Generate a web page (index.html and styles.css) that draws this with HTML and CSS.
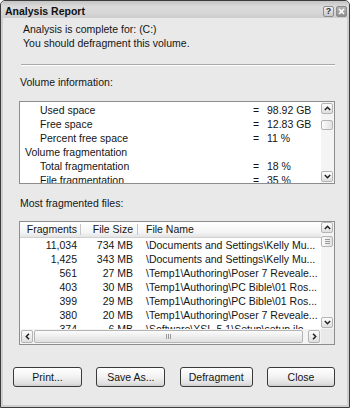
FILE: index.html
```html
<!DOCTYPE html>
<html>
<head>
<meta charset="utf-8">
<title>Analysis Report</title>
<link rel="stylesheet" href="styles.css">
</head>
<body>
<div class="window">
  <div class="titlebar">
    <span class="title">Analysis Report</span>
    <div class="caption-btns">
      <span class="cbtn help">?</span>
      <span class="cbtn close"><svg width="7" height="7" viewBox="0 0 7 7"><path d="M1 1L6 6M6 1L1 6" stroke="#fff" stroke-width="1.6"/></svg></span>
    </div>
  </div>
  <div class="body">
    <p class="msg">Analysis is complete for: (C:)<br>You should defragment this volume.</p>
    <div class="sep"></div>
    <div class="label">Volume information:</div>
    <div class="listbox vol">
      <div class="vol-rows">
        <div class="vrow sub"><span class="k">Used space</span><span class="eq">=</span><span class="v">98.92 GB</span></div>
        <div class="vrow sub"><span class="k">Free space</span><span class="eq">=</span><span class="v">12.83 GB</span></div>
        <div class="vrow sub"><span class="k">Percent free space</span><span class="eq">=</span><span class="v">11 %</span></div>
        <div class="vrow"><span class="k">Volume fragmentation</span><span class="eq"></span><span class="v"></span></div>
        <div class="vrow sub"><span class="k">Total fragmentation</span><span class="eq">=</span><span class="v">18 %</span></div>
        <div class="vrow sub"><span class="k">File fragmentation</span><span class="eq">=</span><span class="v">35 %</span></div>
      </div>
      <div class="vscroll">
        <span class="sbtn"><svg width="7" height="5" viewBox="0 0 7 5"><path d="M0.8 4L3.5 1.3L6.2 4" fill="none" stroke="#222" stroke-width="1.5"/></svg></span>
        <span class="thumb vol-thumb"></span>
        <span class="track-fill"></span>
        <span class="sbtn"><svg width="7" height="5" viewBox="0 0 7 5"><path d="M0.8 1L3.5 3.7L6.2 1" fill="none" stroke="#222" stroke-width="1.5"/></svg></span>
      </div>
    </div>
    <div class="label label2">Most fragmented files:</div>
    <div class="listbox files">
      <div class="table">
        <div class="hdr">
          <span class="c1">Fragments</span>
          <span class="c2">File Size</span>
          <span class="c3">File Name</span>
        </div>
        <div class="frow"><span class="c1">11,034</span><span class="c2">734 MB</span><span class="c3">\Documents and Settings\Kelly Mu...</span></div>
        <div class="frow"><span class="c1">1,425</span><span class="c2">343 MB</span><span class="c3">\Documents and Settings\Kelly Mu...</span></div>
        <div class="frow"><span class="c1">561</span><span class="c2">27 MB</span><span class="c3">\Temp1\Authoring\Poser 7 Reveale...</span></div>
        <div class="frow"><span class="c1">403</span><span class="c2">30 MB</span><span class="c3">\Temp1\Authoring\PC Bible\01 Ros...</span></div>
        <div class="frow"><span class="c1">399</span><span class="c2">29 MB</span><span class="c3">\Temp1\Authoring\PC Bible\01 Ros...</span></div>
        <div class="frow"><span class="c1">380</span><span class="c2">20 MB</span><span class="c3">\Temp1\Authoring\Poser 7 Reveale...</span></div>
        <div class="frow"><span class="c1">374</span><span class="c2">6 MB</span><span class="c3">\Software\XSL-5.1\Setup\setup.ilo...</span></div>
      </div>
      <div class="vscroll files-v">
        <span class="sbtn"><svg width="7" height="5" viewBox="0 0 7 5"><path d="M0.8 4L3.5 1.3L6.2 4" fill="none" stroke="#222" stroke-width="1.5"/></svg></span>
        <span class="thumb files-thumb"><i class="grip-h"></i></span>
        <span class="track-fill"></span>
        <span class="sbtn"><svg width="7" height="5" viewBox="0 0 7 5"><path d="M0.8 1L3.5 3.7L6.2 1" fill="none" stroke="#222" stroke-width="1.5"/></svg></span>
      </div>
      <div class="hscroll">
        <span class="sbtn hbtn"><svg width="5" height="7" viewBox="0 0 5 7"><path d="M4 0.8L1.3 3.5L4 6.2" fill="none" stroke="#222" stroke-width="1.5"/></svg></span>
        <span class="thumb hthumb"><i class="grip-v"></i></span>
        <span class="sbtn hbtn"><svg width="5" height="7" viewBox="0 0 5 7"><path d="M1 0.8L3.7 3.5L1 6.2" fill="none" stroke="#222" stroke-width="1.5"/></svg></span>
      </div>
      <div class="corner"></div>
    </div>
    <div class="buttons">
      <button class="btn w69">Print...</button>
      <button class="btn w69">Save As...</button>
      <button class="btn w73">Defragment</button>
      <button class="btn w68">Close</button>
    </div>
  </div>
</div>
</body>
</html>
```
FILE: styles.css
```css
html, body {
  margin: 0;
  padding: 0;
  background: #ffffff;
}

.window {
  width: 350px;
  height: 408px;
  box-sizing: border-box;
  border: 1px solid #3c3c3c;
  border-radius: 5px 5px 0 0;
  background: #cfcfcf;
  display: flex;
  flex-direction: column;
  font-family: "Liberation Sans", Arial, sans-serif;
  font-size: 10.5px;
  color: #151515;
  overflow: hidden;
}

.titlebar {
  height: 17px;
  flex: none;
  display: flex;
  align-items: center;
  justify-content: space-between;
  padding: 0 2px 0 4px;
  background: linear-gradient(#c4c4c4, #dcdcdc 35%, #d6d6d6 70%, #cdcdcd);
}

.title {
  font-weight: bold;
  font-size: 10.5px;
  color: #111;
  padding-top: 2px;
}

.caption-btns {
  display: flex;
  gap: 2px;
  padding-top: 3px;
}

.cbtn {
  width: 11px;
  height: 11px;
  box-sizing: border-box;
  border: 1px solid #8c8c8c;
  border-radius: 2px;
  display: flex;
  align-items: center;
  justify-content: center;
  font-size: 9px;
  font-weight: bold;
  line-height: 1;
}

.help {
  background: linear-gradient(#f0f0f0, #c8c8c8);
  color: #333;
}

.close {
  background: linear-gradient(#b4b4b4, #8e8e8e);
}

.body {
  flex: 1;
  margin: 0 2px 2px 2px;
  background: #e9e9e9;
  display: flex;
  flex-direction: column;
  padding: 0 12px 0 10px;
}

.msg {
  margin: 4px 0 0 10px;
  line-height: 14px;
}

.sep {
  margin: 14px 0 0 8px;
  height: 0;
  border-top: 1px solid #a9a9a9;
  border-bottom: 1px solid #ffffff;
}

.label {
  margin: 9px 0 0 7px;
  line-height: 14px;
}

.label2 {
  margin-top: 12px;
}

.listbox {
  margin: 12px 0 0 6px;
  border: 1px solid #8d8d8d;
  background: #ffffff;
  box-sizing: border-box;
  display: grid;
  overflow: hidden;
}

.vol {
  height: 83px;
  grid-template-columns: 1fr 13px;
}

.vol-rows {
  padding-top: 1px;
  overflow: hidden;
}

.vrow {
  display: grid;
  grid-template-columns: 228px 14px 1fr;
  height: 14px;
  line-height: 14px;
  padding-left: 5px;
  white-space: nowrap;
}

.vrow.sub .k {
  padding-left: 15px;
}

.vscroll {
  display: flex;
  flex-direction: column;
  padding: 1px 1px 1px 0;
  background: #f4f4f4;
}

.sbtn {
  flex: none;
  box-sizing: border-box;
  width: 12px;
  height: 11px;
  border: 1px solid #b4b4b4;
  border-radius: 2px;
  background: linear-gradient(#fdfdfd, #dedede);
  display: flex;
  align-items: center;
  justify-content: center;
}

.thumb {
  flex: none;
  box-sizing: border-box;
  border: 1px solid #b4b4b4;
  border-radius: 2px;
  background: linear-gradient(90deg, #fbfbfb, #e2e2e2);
  display: flex;
  align-items: center;
  justify-content: center;
}

.vol-thumb {
  margin-top: 6px;
  height: 10px;
}

.track-fill {
  flex: 1;
}

.files {
  margin-top: 11px;
  height: 124px;
  grid-template-columns: 1fr 13px;
  grid-template-rows: 1fr 15px;
}

.table {
  overflow: hidden;
}

.hdr {
  display: grid;
  grid-template-columns: 61px 57px 1fr;
  height: 16px;
  line-height: 15px;
  box-sizing: border-box;
  border-bottom: 1px solid #d0d0d0;
  background: linear-gradient(#ffffff, #f4f4f4 70%, #e4e4e4);
  white-space: nowrap;
}

.hdr .c1, .hdr .c2 {
  text-align: right;
  padding-right: 4px;
  box-shadow: inset -1px 0 0 #c6c6c6;
  margin: 2px 0 3px 0;
  line-height: 11px;
}

.hdr .c2 {
  padding-right: 5px;
}

.hdr .c3 {
  padding-left: 8px;
}

.frow {
  display: grid;
  grid-template-columns: 61px 57px 1fr;
  height: 14px;
  line-height: 14px;
  white-space: nowrap;
}

.frow .c1 {
  text-align: right;
  padding-right: 4px;
}

.frow .c2 {
  text-align: right;
  padding-right: 5px;
}

.frow .c3 {
  padding-left: 8px;
  overflow: hidden;
}

.files-v {
  padding-top: 0;
  padding-bottom: 1px;
}

.files-thumb {
  margin-top: 3px;
  height: 11px;
}

.grip-h {
  display: block;
  width: 5px;
  height: 5px;
  background: repeating-linear-gradient(#9a9a9a 0 1px, transparent 1px 2px);
}

.hscroll {
  display: flex;
  align-items: center;
  padding: 1px 1px 1px 1px;
  gap: 1px;
  background: #f4f4f4;
}

.hbtn {
  width: 12px;
  height: 13px;
}

.hthumb {
  flex: 1;
  height: 13px;
  margin-right: 4px;
  background: linear-gradient(#fbfbfb, #e0e0e0);
}

.grip-v {
  display: block;
  width: 5px;
  height: 5px;
  background: repeating-linear-gradient(90deg, #9a9a9a 0 1px, transparent 1px 2px);
}

.corner {
  background: #e9e9e9;
}

.buttons {
  margin-top: 22px;
  display: flex;
  justify-content: space-between;
}

.btn {
  height: 20px;
  box-sizing: border-box;
  border: 1px solid #3a3a3a;
  border-radius: 3px;
  background: linear-gradient(#ffffff, #f2f2f2 50%, #e0e0e0 85%, #cfcfcf);
  font-family: "Liberation Sans", Arial, sans-serif;
  font-size: 10.5px;
  color: #151515;
  padding: 0;
}

.w69 { width: 69px; }
.w73 { width: 73px; }
.w68 { width: 68px; }
```
